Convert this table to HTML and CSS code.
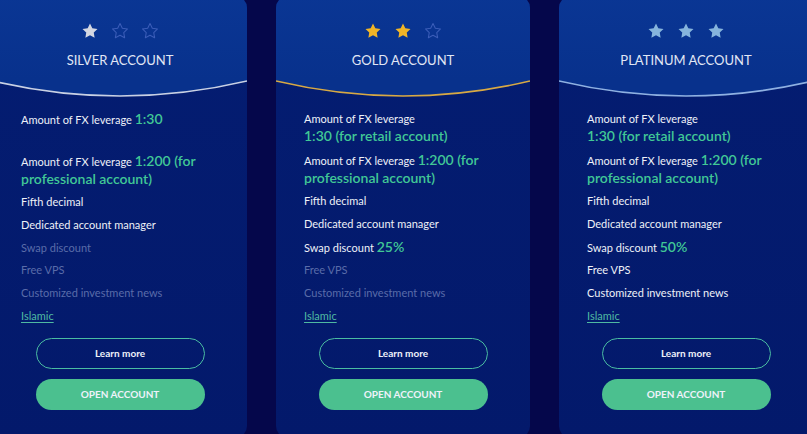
FILE: index.html
```html
<!DOCTYPE html>
<html lang="en">
<head>
<meta charset="utf-8">
<title>Accounts</title>
<link rel="stylesheet" href="styles.css">
</head>
<body>
<div class="carousel">
  <div class="track">
    <!-- SILVER -->
    <section class="card card--silver">
      <header class="card__head">
        <div class="stars">
          <svg class="star star--on" viewBox="0 0 24 24"><path d="M12 2l3.09 6.26L22 9.27l-5 4.87 1.18 6.88L12 17.77l-6.18 3.25L7 14.14 2 9.27l6.91-1.01L12 2z"/></svg>
          <svg class="star star--off" viewBox="0 0 24 24"><path d="M12 2l3.09 6.26L22 9.27l-5 4.87 1.18 6.88L12 17.77l-6.18 3.25L7 14.14 2 9.27l6.91-1.01L12 2z"/></svg>
          <svg class="star star--off" viewBox="0 0 24 24"><path d="M12 2l3.09 6.26L22 9.27l-5 4.87 1.18 6.88L12 17.77l-6.18 3.25L7 14.14 2 9.27l6.91-1.01L12 2z"/></svg>
        </div>
        <h2 class="card__title">SILVER ACCOUNT</h2>
      </header>
      <svg class="arc" viewBox="0 0 254 17" preserveAspectRatio="none"><path class="arc__fill" d="M0 0 L254 0 L254 1 Q127 31 0 1 Z"/><path class="arc__line" d="M0 1 Q127 31 254 1"/></svg>
      <div class="card__body">
        <ul class="features">
          <li class="feature feature--tall">Amount of FX leverage <span class="hl">1:30</span></li>
          <li class="feature">Amount of FX leverage <span class="hl">1:200 (for professional account)</span></li>
          <li class="feature">Fifth decimal</li>
          <li class="feature">Dedicated account manager</li>
          <li class="feature feature--off">Swap discount</li>
          <li class="feature feature--off">Free VPS</li>
          <li class="feature feature--off">Customized investment news</li>
          <li class="feature"><a class="link" href="#">Islamic</a></li>
        </ul>
        <div class="actions">
          <a class="btn btn--ghost" href="#">Learn more</a>
          <a class="btn btn--solid" href="#">OPEN ACCOUNT</a>
        </div>
      </div>
    </section>

    <!-- GOLD -->
    <section class="card card--gold">
      <header class="card__head">
        <div class="stars">
          <svg class="star star--on" viewBox="0 0 24 24"><path d="M12 2l3.09 6.26L22 9.27l-5 4.87 1.18 6.88L12 17.77l-6.18 3.25L7 14.14 2 9.27l6.91-1.01L12 2z"/></svg>
          <svg class="star star--on" viewBox="0 0 24 24"><path d="M12 2l3.09 6.26L22 9.27l-5 4.87 1.18 6.88L12 17.77l-6.18 3.25L7 14.14 2 9.27l6.91-1.01L12 2z"/></svg>
          <svg class="star star--off" viewBox="0 0 24 24"><path d="M12 2l3.09 6.26L22 9.27l-5 4.87 1.18 6.88L12 17.77l-6.18 3.25L7 14.14 2 9.27l6.91-1.01L12 2z"/></svg>
        </div>
        <h2 class="card__title">GOLD ACCOUNT</h2>
      </header>
      <svg class="arc" viewBox="0 0 254 17" preserveAspectRatio="none"><path class="arc__fill" d="M0 0 L254 0 L254 1 Q127 31 0 1 Z"/><path class="arc__line" d="M0 1 Q127 31 254 1"/></svg>
      <div class="card__body">
        <ul class="features">
          <li class="feature">Amount of FX leverage<br><span class="hl">1:30 (for retail account)</span></li>
          <li class="feature">Amount of FX leverage <span class="hl">1:200 (for professional account)</span></li>
          <li class="feature">Fifth decimal</li>
          <li class="feature">Dedicated account manager</li>
          <li class="feature">Swap discount <span class="hl">25%</span></li>
          <li class="feature feature--off">Free VPS</li>
          <li class="feature feature--off">Customized investment news</li>
          <li class="feature"><a class="link" href="#">Islamic</a></li>
        </ul>
        <div class="actions">
          <a class="btn btn--ghost" href="#">Learn more</a>
          <a class="btn btn--solid" href="#">OPEN ACCOUNT</a>
        </div>
      </div>
    </section>

    <!-- PLATINUM -->
    <section class="card card--platinum">
      <header class="card__head">
        <div class="stars">
          <svg class="star star--on" viewBox="0 0 24 24"><path d="M12 2l3.09 6.26L22 9.27l-5 4.87 1.18 6.88L12 17.77l-6.18 3.25L7 14.14 2 9.27l6.91-1.01L12 2z"/></svg>
          <svg class="star star--on" viewBox="0 0 24 24"><path d="M12 2l3.09 6.26L22 9.27l-5 4.87 1.18 6.88L12 17.77l-6.18 3.25L7 14.14 2 9.27l6.91-1.01L12 2z"/></svg>
          <svg class="star star--on" viewBox="0 0 24 24"><path d="M12 2l3.09 6.26L22 9.27l-5 4.87 1.18 6.88L12 17.77l-6.18 3.25L7 14.14 2 9.27l6.91-1.01L12 2z"/></svg>
        </div>
        <h2 class="card__title">PLATINUM ACCOUNT</h2>
      </header>
      <svg class="arc" viewBox="0 0 254 17" preserveAspectRatio="none"><path class="arc__fill" d="M0 0 L254 0 L254 1 Q127 31 0 1 Z"/><path class="arc__line" d="M0 1 Q127 31 254 1"/></svg>
      <div class="card__body">
        <ul class="features">
          <li class="feature">Amount of FX leverage<br><span class="hl">1:30 (for retail account)</span></li>
          <li class="feature">Amount of FX leverage <span class="hl">1:200 (for professional account)</span></li>
          <li class="feature">Fifth decimal</li>
          <li class="feature">Dedicated account manager</li>
          <li class="feature">Swap discount <span class="hl">50%</span></li>
          <li class="feature">Free VPS</li>
          <li class="feature">Customized investment news</li>
          <li class="feature"><a class="link" href="#">Islamic</a></li>
        </ul>
        <div class="actions">
          <a class="btn btn--ghost" href="#">Learn more</a>
          <a class="btn btn--solid" href="#">OPEN ACCOUNT</a>
        </div>
      </div>
    </section>
  </div>
</div>
</body>
</html>
```

FILE: styles.css
```css
* { box-sizing: border-box; }

html, body {
  margin: 0;
  padding: 0;
  width: 807px;
  height: 434px;
  overflow: hidden;
  background: #05074b;
  font-family: Lato, "Open Sans", sans-serif;
}

.carousel {
  width: 807px;
  height: 434px;
  overflow: hidden;
}

.track {
  display: flex;
  gap: 29px;
  margin-left: -7px;
  margin-top: -4px;
}

.card {
  flex: 0 0 254px;
  width: 254px;
  height: 442px;
  border-radius: 12px;
  overflow: hidden;
  display: flex;
  flex-direction: column;
  background: linear-gradient(180deg, #041d72 0%, #03196b 100%);
}

.card--silver { --line: #c9d1e4; --star-on: #d3d7e2; }
.card--gold { --line: #d8a944; --star-on: #f1b527; }
.card--platinum { --line: #8fb1e2; --star-on: #86b4dc; }

.card__head {
  height: 84px;
  padding-top: 26px;
  display: flex;
  flex-direction: column;
  align-items: center;
  background: linear-gradient(180deg, #0a3694 0%, #08318c 100%);
}

.stars {
  display: flex;
  gap: 12px;
  height: 18px;
}

.star {
  width: 18px;
  height: 18px;
  display: block;
}

.star--on path { fill: var(--star-on); }
.star--off path {
  fill: none;
  stroke: #3b5db8;
  stroke-width: 1.4;
  stroke-linejoin: round;
}

.card__title {
  margin: 12px 0 0;
  font-size: 13px;
  line-height: 16px;
  font-weight: 400;
  color: #e1e7f5;
  letter-spacing: 0;
}

.arc {
  display: block;
  width: 254px;
  height: 17px;
  flex: 0 0 17px;
}

.arc__fill { fill: #08318c; }
.arc__line {
  fill: none;
  stroke: var(--line);
  stroke-width: 1.6;
}

.card__body {
  padding: 13px 28px 0;
  display: flex;
  flex-direction: column;
}

.features {
  list-style: none;
  margin: 0;
  padding: 0;
  display: flex;
  flex-direction: column;
  gap: 5.7px;
}

.feature {
  font-size: 11px;
  line-height: 17px;
  color: #eef1f8;
}

.feature--tall { min-height: 36px; }

.feature--off { color: #5a6ca9; }

.hl {
  font-size: 14px;
  font-weight: 600;
  color: #41c896;
}

.link {
  color: #4fb9a2;
  text-decoration: underline;
  text-underline-offset: 2px;
}

.actions {
  display: flex;
  flex-direction: column;
  align-items: center;
  gap: 10px;
  margin-top: 14px;
}

.btn {
  width: 169px;
  height: 31px;
  border-radius: 16px;
  display: flex;
  align-items: center;
  justify-content: center;
  text-decoration: none;
  color: #eef2fa;
}

.btn--ghost {
  border: 1.5px solid #4abca2;
  font-size: 10px;
  font-weight: 700;
}

.btn--solid {
  background: #4bc08f;
  font-size: 10px;
  font-weight: 700;
}
```
